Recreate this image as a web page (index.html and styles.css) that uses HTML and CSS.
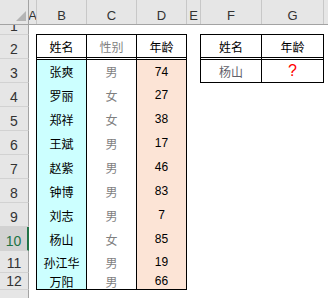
FILE: index.html
```html
<!DOCTYPE html>
<html>
<head>
    <meta charset="utf-8">
    <title>年龄查询</title>
    <link rel="stylesheet" href="styles.css">
</head>
<body>
    <div class="sheet">
        <div class="col-heads">
            <div class="ch corner">
                <svg width="10" height="10" viewBox="0 0 10 10"><polygon points="10,0 10,10 0,10" fill="#b4b4b4"/></svg>
            </div>
            <div class="ch col-a">A</div>
            <div class="ch col-b">B</div>
            <div class="ch col-c">C</div>
            <div class="ch col-d">D</div>
            <div class="ch col-e">E</div>
            <div class="ch col-f">F</div>
            <div class="ch col-g">G</div>
            <div class="ch col-h"></div>
        </div>

        <div class="sheet-body">
            <div class="row-heads">
                <div class="rh r1">1</div>
                <div class="rh">2</div>
                <div class="rh">3</div>
                <div class="rh">4</div>
                <div class="rh">5</div>
                <div class="rh">6</div>
                <div class="rh">7</div>
                <div class="rh">8</div>
                <div class="rh">9</div>
                <div class="rh active">10</div>
                <div class="rh r11">11</div>
                <div class="rh r12">12</div>
                <div class="rh r13">13</div>
            </div>

            <div class="cells">
                <!-- B2:D12 -->
                <div class="grid people">
                    <div class="cell hd c-name">姓名</div>
                    <div class="cell hd c-sex">性别</div>
                    <div class="cell hd c-age">年龄</div>

                    <div class="cell c-name">张爽</div><div class="cell c-sex">男</div><div class="cell c-age">74</div>
                    <div class="cell c-name">罗丽</div><div class="cell c-sex">女</div><div class="cell c-age">27</div>
                    <div class="cell c-name">郑祥</div><div class="cell c-sex">女</div><div class="cell c-age">38</div>
                    <div class="cell c-name">王斌</div><div class="cell c-sex">男</div><div class="cell c-age">17</div>
                    <div class="cell c-name">赵紫</div><div class="cell c-sex">男</div><div class="cell c-age">46</div>
                    <div class="cell c-name">钟博</div><div class="cell c-sex">男</div><div class="cell c-age">83</div>
                    <div class="cell c-name">刘志</div><div class="cell c-sex">男</div><div class="cell c-age">7</div>
                    <div class="cell c-name">杨山</div><div class="cell c-sex">女</div><div class="cell c-age">85</div>
                    <div class="cell c-name">孙江华</div><div class="cell c-sex">男</div><div class="cell c-age">19</div>
                    <div class="cell c-name">万阳</div><div class="cell c-sex">男</div><div class="cell c-age">66</div>
                </div>

                <!-- F2:G3 -->
                <div class="grid lookup">
                    <div class="cell hd q-name">姓名</div>
                    <div class="cell hd q-age">年龄</div>
                    <div class="cell q-name query">杨山</div>
                    <div class="cell q-age result">?</div>
                </div>
            </div>
        </div>
    </div>
</body>
</html>
```

FILE: styles.css
```css
body {
    margin: 0;
    overflow: hidden;
    background: #fff;
    font-family: "Noto Sans CJK SC", sans-serif;
}
.sheet {
    width: 328px;
    height: 298px;
    overflow: hidden;
}

/* column letters */
.col-heads {
    display: flex;
    height: 24px;
    background: #e6e6e6;
    border-bottom: 1px solid #a3a3a3;
}
.ch {
    box-sizing: border-box;
    flex: none;
    display: flex;
    align-items: flex-end;
    justify-content: center;
    padding-bottom: 2px;
    border-right: 1px solid #c8c8c8;
    overflow: hidden;
    color: #333;
    font: 13px/1 "Liberation Sans", sans-serif;
}
.corner {
    width: 29px;
    justify-content: flex-end;
    padding: 0 2px 3px 0;
    border-right-color: #a3a3a3;
}
.corner svg {
    display: block;
}
.col-a { width: 8px; }
.col-b, .col-c, .col-d { width: 50px; }
.col-e { width: 14px; }
.col-f { width: 61px; }
.col-g { width: 62px; }
.col-h {
    flex: 1;
    border-right: none;
}

/* row numbers */
.sheet-body {
    display: flex;
}
.row-heads {
    width: 29px;
    flex: none;
    display: flex;
    flex-direction: column;
    background: #e6e6e6;
}
.rh {
    box-sizing: border-box;
    height: 24px;
    display: flex;
    align-items: flex-end;
    justify-content: center;
    padding-bottom: 2px;
    border-right: 1px solid #a3a3a3;
    border-bottom: 1px solid #d2d2d2;
    overflow: hidden;
    color: #333;
    font: 14px/1 "Liberation Sans", sans-serif;
}
.rh.r1 { height: 10px; padding-bottom: 1px; }
.rh.r11 { height: 22px; }
.rh.r12 { height: 17px; padding-bottom: 1px; }
.rh.r13 {
    height: 20px;
    align-items: flex-start;
    padding: 7px 0 0;
    border-bottom: none;
}
.rh.active {
    background: #d2d2d2;
    color: #217346;
    border-right: 2px solid #217346;
}

/* cell area */
.cells {
    flex: 1;
    display: flex;
    align-items: flex-start;
    gap: 13px;
    padding: 9px 0 0 7px;
}
.grid {
    display: grid;
    border: 1px solid #000;
    font-size: 12px;
    color: #000;
}
.people {
    grid-template-columns: 50px 50px 49px;
    grid-template-rows: 25px 23px repeat(7, 24px) 22px 16px;
}
.lookup {
    grid-template-columns: 61px 61px;
    grid-template-rows: 25px 22px;
}
.cell {
    box-sizing: border-box;
    display: flex;
    align-items: center;
    justify-content: center;
    white-space: nowrap;
}
.c-name, .c-sex, .q-name {
    border-right: 1px solid #000;
}
.c-name { background: #ccffff; }
.c-sex { color: #7f7f7f; }
.c-age {
    background: #fce4d6;
    font-family: "Liberation Sans", sans-serif;
}
.cell.hd {
    background: #fff;
    border-bottom: 3px double #000;
    font-family: "Noto Sans CJK SC", sans-serif;
}
.query { color: #5f5f6a; }
.result {
    color: #ff0000;
    font: 16px "Liberation Sans", sans-serif;
}
```
